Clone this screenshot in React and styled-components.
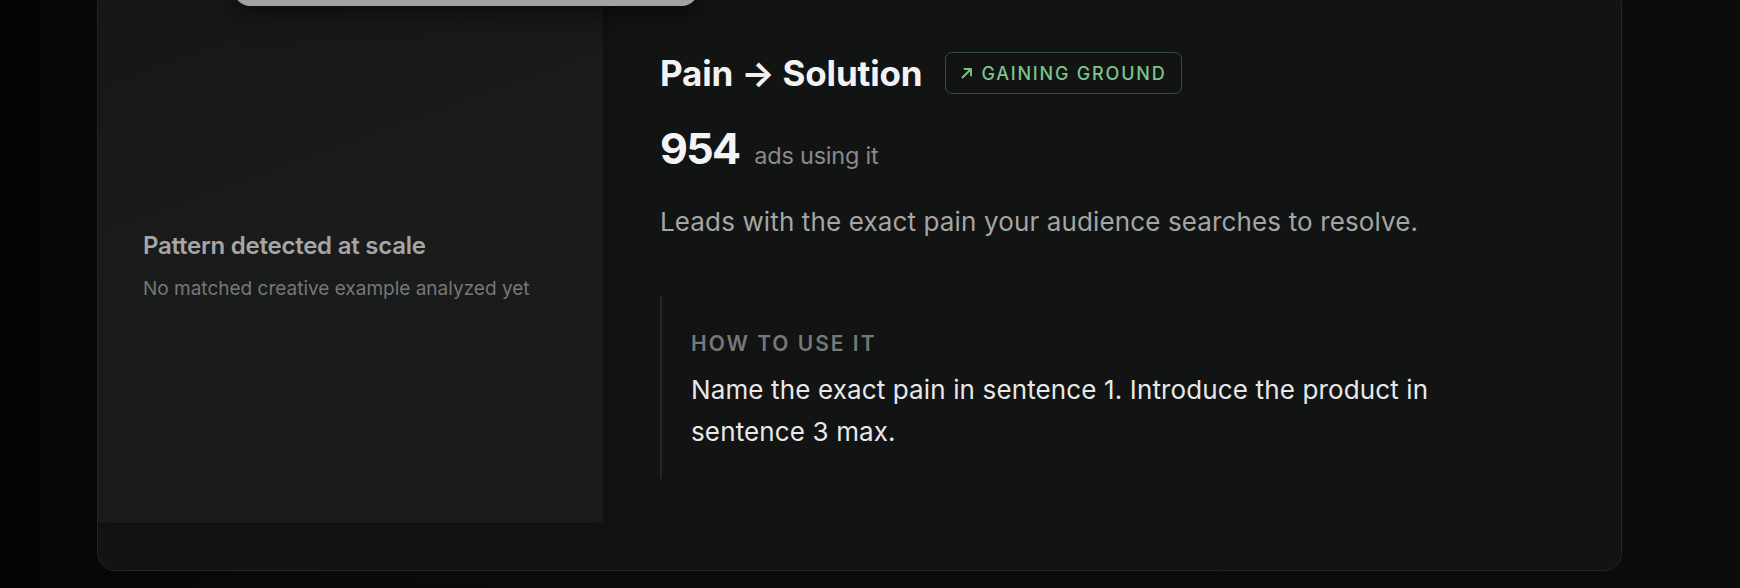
import React from "react";
import styled, { createGlobalStyle } from "styled-components";

const GlobalStyle = createGlobalStyle`
  html, body {
    margin: 0;
    height: 100%;
    overflow: hidden;
  }
  body {
    background: linear-gradient(90deg, #050505 0%, #090a0a 20%, #0b0c0c 100%);
    font-family: Inter, "Noto Sans", sans-serif;
    -webkit-font-smoothing: antialiased;
  }
`;

const Page = styled.div`
  padding: 0 118px 0 97px;
`;

const Card = styled.div`
  position: relative;
  margin-top: -14px;
  display: flex;
  padding-bottom: 47px;
  background: #121313;
  border: 1px solid #242525;
  border-radius: 18px;
  overflow: hidden;
`;

const Handle = styled.div`
  position: absolute;
  top: -20px;
  left: 136px;
  width: 464px;
  height: 39px;
  background: #a2a3a3;
  border-radius: 0 0 16px 16px;
  box-shadow: 0 6px 26px rgba(0, 0, 0, 0.55);
  z-index: 2;
`;

const Media = styled.div`
  width: 505px;
  flex-shrink: 0;
  display: flex;
  flex-direction: column;
  justify-content: center;
  padding: 22px 40px 0 45px;
  box-sizing: border-box;
  background: linear-gradient(160deg, #151616 0%, #1a1b1b 45%, #1a1b1b 100%);
  box-shadow: 2px 0 10px rgba(0, 0, 0, 0.25);
`;

const MediaTitle = styled.div`
  font-size: 24px;
  font-weight: 600;
  line-height: 30px;
  color: #a6a6a6;
  letter-spacing: -0.01em;
`;

const MediaNote = styled.div`
  margin-top: 16px;
  font-size: 19px;
  line-height: 24px;
  color: #767777;
  letter-spacing: 0;
`;

const Content = styled.div`
  flex: 1;
  padding: 64px 40px 44px 57px;
  display: flex;
  flex-direction: column;
`;

const TitleRow = styled.div`
  display: flex;
  align-items: center;
  gap: 23px;
  height: 44px;
`;

const Title = styled.h2`
  margin: 0;
  font-size: 35px;
  line-height: 44px;
  font-weight: 700;
  color: #f2f2f2;
  letter-spacing: -0.005em;
`;

const Badge = styled.span`
  display: inline-flex;
  align-items: center;
  gap: 7px;
  height: 42px;
  box-sizing: border-box;
  padding: 0 14px 0 14px;
  border: 1.5px solid #2e5337;
  border-radius: 7px;
  color: #7cc48a;
  font-size: 18px;
  font-weight: 500;
  letter-spacing: 0.1em;
  text-transform: uppercase;
`;

const CountRow = styled.div`
  margin-top: 27px;
  display: flex;
  align-items: baseline;
  gap: 15px;
  height: 52px;
`;

const Count = styled.span`
  font-size: 43px;
  line-height: 52px;
  font-weight: 700;
  color: #f4f4f4;
  letter-spacing: -0.04em;
`;

const CountLabel = styled.span`
  font-size: 23.5px;
  color: #8a8b8b;
  letter-spacing: -0.01em;
`;

const Description = styled.p`
  margin: 30px 0 0;
  font-size: 26px;
  line-height: 36px;
  color: #a4a5a5;
  letter-spacing: 0.005em;
`;

const HowTo = styled.div`
  margin-top: 56px;
  max-width: 790px;
  border-left: 2px solid #252626;
  padding: 34px 0 26px 29px;
`;

const HowToLabel = styled.div`
  font-size: 21px;
  line-height: 28px;
  font-weight: 600;
  color: #777878;
  letter-spacing: 0.095em;
  text-transform: uppercase;
`;

const HowToText = styled.p`
  margin: 11px 0 0;
  font-size: 26px;
  line-height: 42px;
  color: #e8e8e8;
  letter-spacing: 0.005em;
`;

const TrendArrow = () => (
  <svg width="14" height="14" viewBox="0 0 14 14" fill="none">
    <path
      d="M2.5 11.5 L11 3 M4.5 3 H11 V9.5"
      stroke="currentColor"
      strokeWidth="1.9"
      strokeLinecap="round"
      strokeLinejoin="round"
    />
  </svg>
);

export default function App() {
  return (
    <>
      <GlobalStyle />
      <Page>
        <Card>
          <Handle />
          <Media>
            <MediaTitle>Pattern detected at scale</MediaTitle>
            <MediaNote>No matched creative example analyzed yet</MediaNote>
          </Media>
          <Content>
            <TitleRow>
              <Title>Pain → Solution</Title>
              <Badge>
                <TrendArrow />
                Gaining ground
              </Badge>
            </TitleRow>
            <CountRow>
              <Count>954</Count>
              <CountLabel>ads using it</CountLabel>
            </CountRow>
            <Description>
              Leads with the exact pain your audience searches to resolve.
            </Description>
            <HowTo>
              <HowToLabel>How to use it</HowToLabel>
              <HowToText>
                Name the exact pain in sentence 1. Introduce the product in
                sentence 3 max.
              </HowToText>
            </HowTo>
          </Content>
        </Card>
      </Page>
    </>
  );
}
